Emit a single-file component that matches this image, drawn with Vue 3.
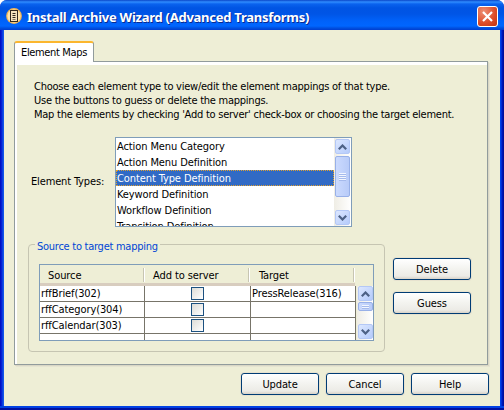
<script setup>
const hints = [
  'Choose each element type to view/edit the element mappings of that type.',
  'Use the buttons to guess or delete the mappings.',
  "Map the elements by checking 'Add to server' check-box or choosing the target element.",
]
const types = ['Action Menu Category', 'Action Menu Definition', 'Content Type Definition', 'Keyword Definition', 'Workflow Definition', 'Transition Definition']
const selected = 2
const rows = [
  { source: 'rffBrief(302)', target: 'PressRelease(316)' },
  { source: 'rffCategory(304)', target: '' },
  { source: 'rffCalendar(303)', target: '' },
]
</script>

<template>
  <div class="window">
    <header class="titlebar">
      <svg class="app-icon" width="16" height="16" viewBox="0 0 16 16">
        <circle cx="8" cy="8" r="7.9" fill="#f3b655" />
        <circle cx="8" cy="8" r="6.6" fill="#ffe5af" />
        <rect x="4.5" y="2.5" width="7" height="11" fill="#f7e3bd" stroke="#33281d" />
        <path d="M6.500 5.500h3M6.500 7.500h3M6.500 9.500h3" stroke="#33281d" />
        <path d="M6.500 11.500h3" stroke="#8b775c" />
      </svg>
      <h1>Install Archive Wizard (Advanced Transforms)</h1>
      <button class="close" aria-label="Close">
        <svg width="19" height="19" viewBox="0 0 19 19"><path d="M5 5l9 9M14 5l-9 9" stroke="#fff" stroke-width="2.2" /></svg>
      </button>
    </header>
    <main class="client">
      <div class="tab">Element Maps</div>
      <section class="panel">
        <div class="hints">
          <p v-for="h in hints" :key="h">{{ h }}</p>
        </div>
        <div class="types">
          <label>Element Types:</label>
          <div class="listbox">
            <ul>
              <li v-for="(t, i) in types" :key="t" :class="{ selected: i === selected }">{{ t }}</li>
            </ul>
            <div class="scroll">
              <div class="sbtn"><svg width="9" height="6" viewBox="0 0 9 6"><path d="M.8 5.2L4.5 1.5l3.7 3.7" /></svg></div>
              <div class="thumb"><i></i><i></i><i></i><i></i></div>
              <div class="sbtn last"><svg width="9" height="6" viewBox="0 0 9 6"><path d="M.8 .8l3.7 3.7L8.2 .8" /></svg></div>
            </div>
          </div>
        </div>
        <div class="mapping">
          <div class="group">
            <div class="legend"><span>Source to target mapping</span></div>
            <div class="table">
              <div class="thead">
                <div>Source</div><div class="th2">Add to server</div><div class="th3">Target</div>
              </div>
              <div class="tbody">
                <div class="cells">
                  <div v-for="r in rows" :key="r.source" class="row">
                    <div>{{ r.source }}</div>
                    <div class="check"><span class="box"></span></div>
                    <div>{{ r.target }}</div>
                  </div>
                  <div class="row"><div></div><div></div><div></div></div>
                </div>
                <div class="scroll small">
                  <div class="sbtn"><svg width="9" height="6" viewBox="0 0 9 6"><path d="M.8 5.2L4.5 1.5l3.7 3.7" /></svg></div>
                  <div class="thumb"><i></i><i></i></div>
                  <div class="sbtn last"><svg width="9" height="6" viewBox="0 0 9 6"><path d="M.8 .8l3.7 3.7L8.2 .8" /></svg></div>
                </div>
              </div>
            </div>
          </div>
          <div class="side">
            <button class="btn">Delete</button>
            <button class="btn">Guess</button>
          </div>
        </div>
      </section>
      <footer>
        <button class="btn">Update</button>
        <button class="btn">Cancel</button>
        <button class="btn">Help</button>
      </footer>
    </main>
  </div>
</template>

<style>
body { margin: 0; background: #fff; overflow: hidden; }
</style>

<style scoped>
* { box-sizing: border-box; }
.window {
  width: 504px; height: 410px; padding: 0 4px 4px; overflow: hidden;
  border-radius: 7px 7px 0 0;
  background: linear-gradient(90deg, #0010b8 0, #0010d0 1px, #0831d9 2px, #1661ee 4px, #0040e8 500px, #0040e8 501px, #0018c0 502px, #000c90 504px);
  box-shadow: inset 0 -2px #0010a0, inset 0 -4px #0041e4;
  font: 11px/14px "DejaVu Sans Condensed", "DejaVu Sans", sans-serif;
  font-stretch: condensed; letter-spacing: -0.1px; color: #000;
}
.titlebar {
  height: 30px; margin: 0 -4px; padding: 0 6px; display: flex; align-items: center;
  background: linear-gradient(#0a46c8 0, #2f8cff 2px, #0a62ee 4px, #0054e3 8px, #0055e6 14px, #0062fa 21px, #0066ff 26px, #0050e0 28px, #003dd0 30px);
}
.app-icon { margin-top: 2px; }
h1 {
  flex: 1; margin: 4px 0 0 5px; font: bold 13px/18px "Noto Sans", sans-serif; letter-spacing: -0.26px;
  color: #fff; text-shadow: 1px 1px #0a2a90; white-space: nowrap;
}
.close {
  width: 21px; height: 21px; margin-top: 3px; padding: 0; border: 1px solid #fff; border-radius: 3px;
  background: radial-gradient(circle at 30% 25%, #ee8f74, #dc4b28 60%, #bf3310);
}
.close svg { display: block; }
.client { height: 376px; padding: 11px 12px 0 10px; background: #eeeed6; }
.tab {
  position: relative; z-index: 1; width: 80px; height: 21px; padding: 3px 0 0 6px; line-height: 14px;
  background: #fff; border: 1px solid #919b9c; border-top: 2px solid #fbb62e; border-bottom: 0;
  border-radius: 3px 3px 0 0; white-space: nowrap; letter-spacing: -0.35px; margin-bottom: -1px;
}
.panel {
  width: 474px; height: 304px; padding: 16px 0 0 11px; border: 1px solid #919b9c;
  box-shadow: inset 2px 3px #fff, 1px 1px #d9d7c5, 2px 2px #e6e4d1;
}
p { margin: 0; height: 14px; padding-left: 8px; white-space: nowrap; letter-spacing: -0.245px; }
.hints { height: 59px; padding-top: 2px; }
.types { display: flex; height: 90px; align-items: center; }
label { width: 89px; padding: 0 0 1px 5px; white-space: nowrap; letter-spacing: -0.15px; }
.listbox { width: 237px; height: 90px; display: flex; border: 1px solid #7f9db9; background: #fff; }
ul { flex: 1; margin: 0; padding: 0; list-style: none; overflow: hidden; }
li { height: 16px; padding: 1px 1px 0; line-height: 16px; }
.selected { background: #316ac5; color: #fff; padding: 1px 0 0; line-height: 14px; border: 1px dotted #e0a030; }
.scroll { width: 17px; display: flex; flex-direction: column; align-items: center; background: linear-gradient(90deg, #efede5, #fff); padding: 1px 0; }
.sbtn {
  width: 15px; height: 15px; flex: none; display: flex; align-items: center; justify-content: center;
  border: 1px solid #b4c8f6; border-radius: 2px; background: linear-gradient(135deg, #dce7ff, #b5cbfb);
}
.sbtn path { fill: none; stroke: #4d6185; stroke-width: 2.2; }
.thumb {
  width: 15px; height: 41px; margin-top: 2px; display: flex; flex-direction: column; align-items: center; justify-content: center; gap: 1px;
  border: 1px solid #98b0e8; border-radius: 2px; background: linear-gradient(90deg, #cbdafe, #b8cbf8);
}
.thumb i { width: 7px; height: 1px; background: #f2f6ff; box-shadow: 0 1px #a5baec; }
.last { margin-top: auto; }
.mapping { display: flex; margin-top: 17px; }
.group { width: 357px; height: 108px; margin-left: 2px; border: 1px solid #c6c5b2; border-radius: 4px; padding: 0 0 0 10px; }
.legend { height: 19px; margin: 0 0 0 -4px; }
.legend span { display: inline-block; margin-top: -5px; padding: 0 2px; background: #eeeed6; color: #0046d5; white-space: nowrap; vertical-align: top; letter-spacing: -0.26px; }
.table { width: 335px; height: 77px; border: 1px solid #7f9db9; display: flex; flex-direction: column; }
.thead { height: 21px; width: 315px; display: grid; grid-template-columns: 104px 105px 105px; border-bottom: 3px solid #d8cdbf; flex: none; }
.thead div { height: 14px; margin-top: 3px; line-height: 16px; padding-left: 8px; border-right: 1px solid #c7c5b2; box-shadow: 1px 0 #fff; white-space: nowrap; }
.thead .th2 { padding-left: 9px; }
.thead .th3 { padding-left: 10px; }
.tbody { flex: 1; min-height: 0; display: flex; }
.cells { width: 316px; background: #fff; overflow: hidden; }
.row { height: 16px; display: grid; grid-template-columns: 105px 106px 105px; line-height: 15px; }
.row div { border-right: 1px solid #777469; border-bottom: 1px solid #777469; white-space: nowrap; padding-left: 1px; }
.row .check { padding: 1px 0 0 46px; }
.box { display: block; width: 13px; height: 13px; border: 1px solid #1c5180; background: linear-gradient(135deg, #dcdcd7, #fff); }
.small { margin-left: 1px; width: 16px; padding: 0 0 1px; }
.small .thumb { height: 9px; margin-top: 1px; }
.side { margin: 14px 0 0 8px; display: flex; flex-direction: column; gap: 12px; }
.btn {
  width: 78px; height: 22px; padding: 1px 0 0; border: 1px solid #003c74; border-radius: 3px; font: inherit; letter-spacing: inherit; line-height: 20px;
  background: linear-gradient(#fff, #f3f3ef 50%, #ecebe6 85%, #d8d2c8); box-shadow: 0 0 0 1px #e7e2cf;
}
footer { display: flex; justify-content: flex-end; gap: 7px; margin: 8px -1px 0 0; }
</style>
